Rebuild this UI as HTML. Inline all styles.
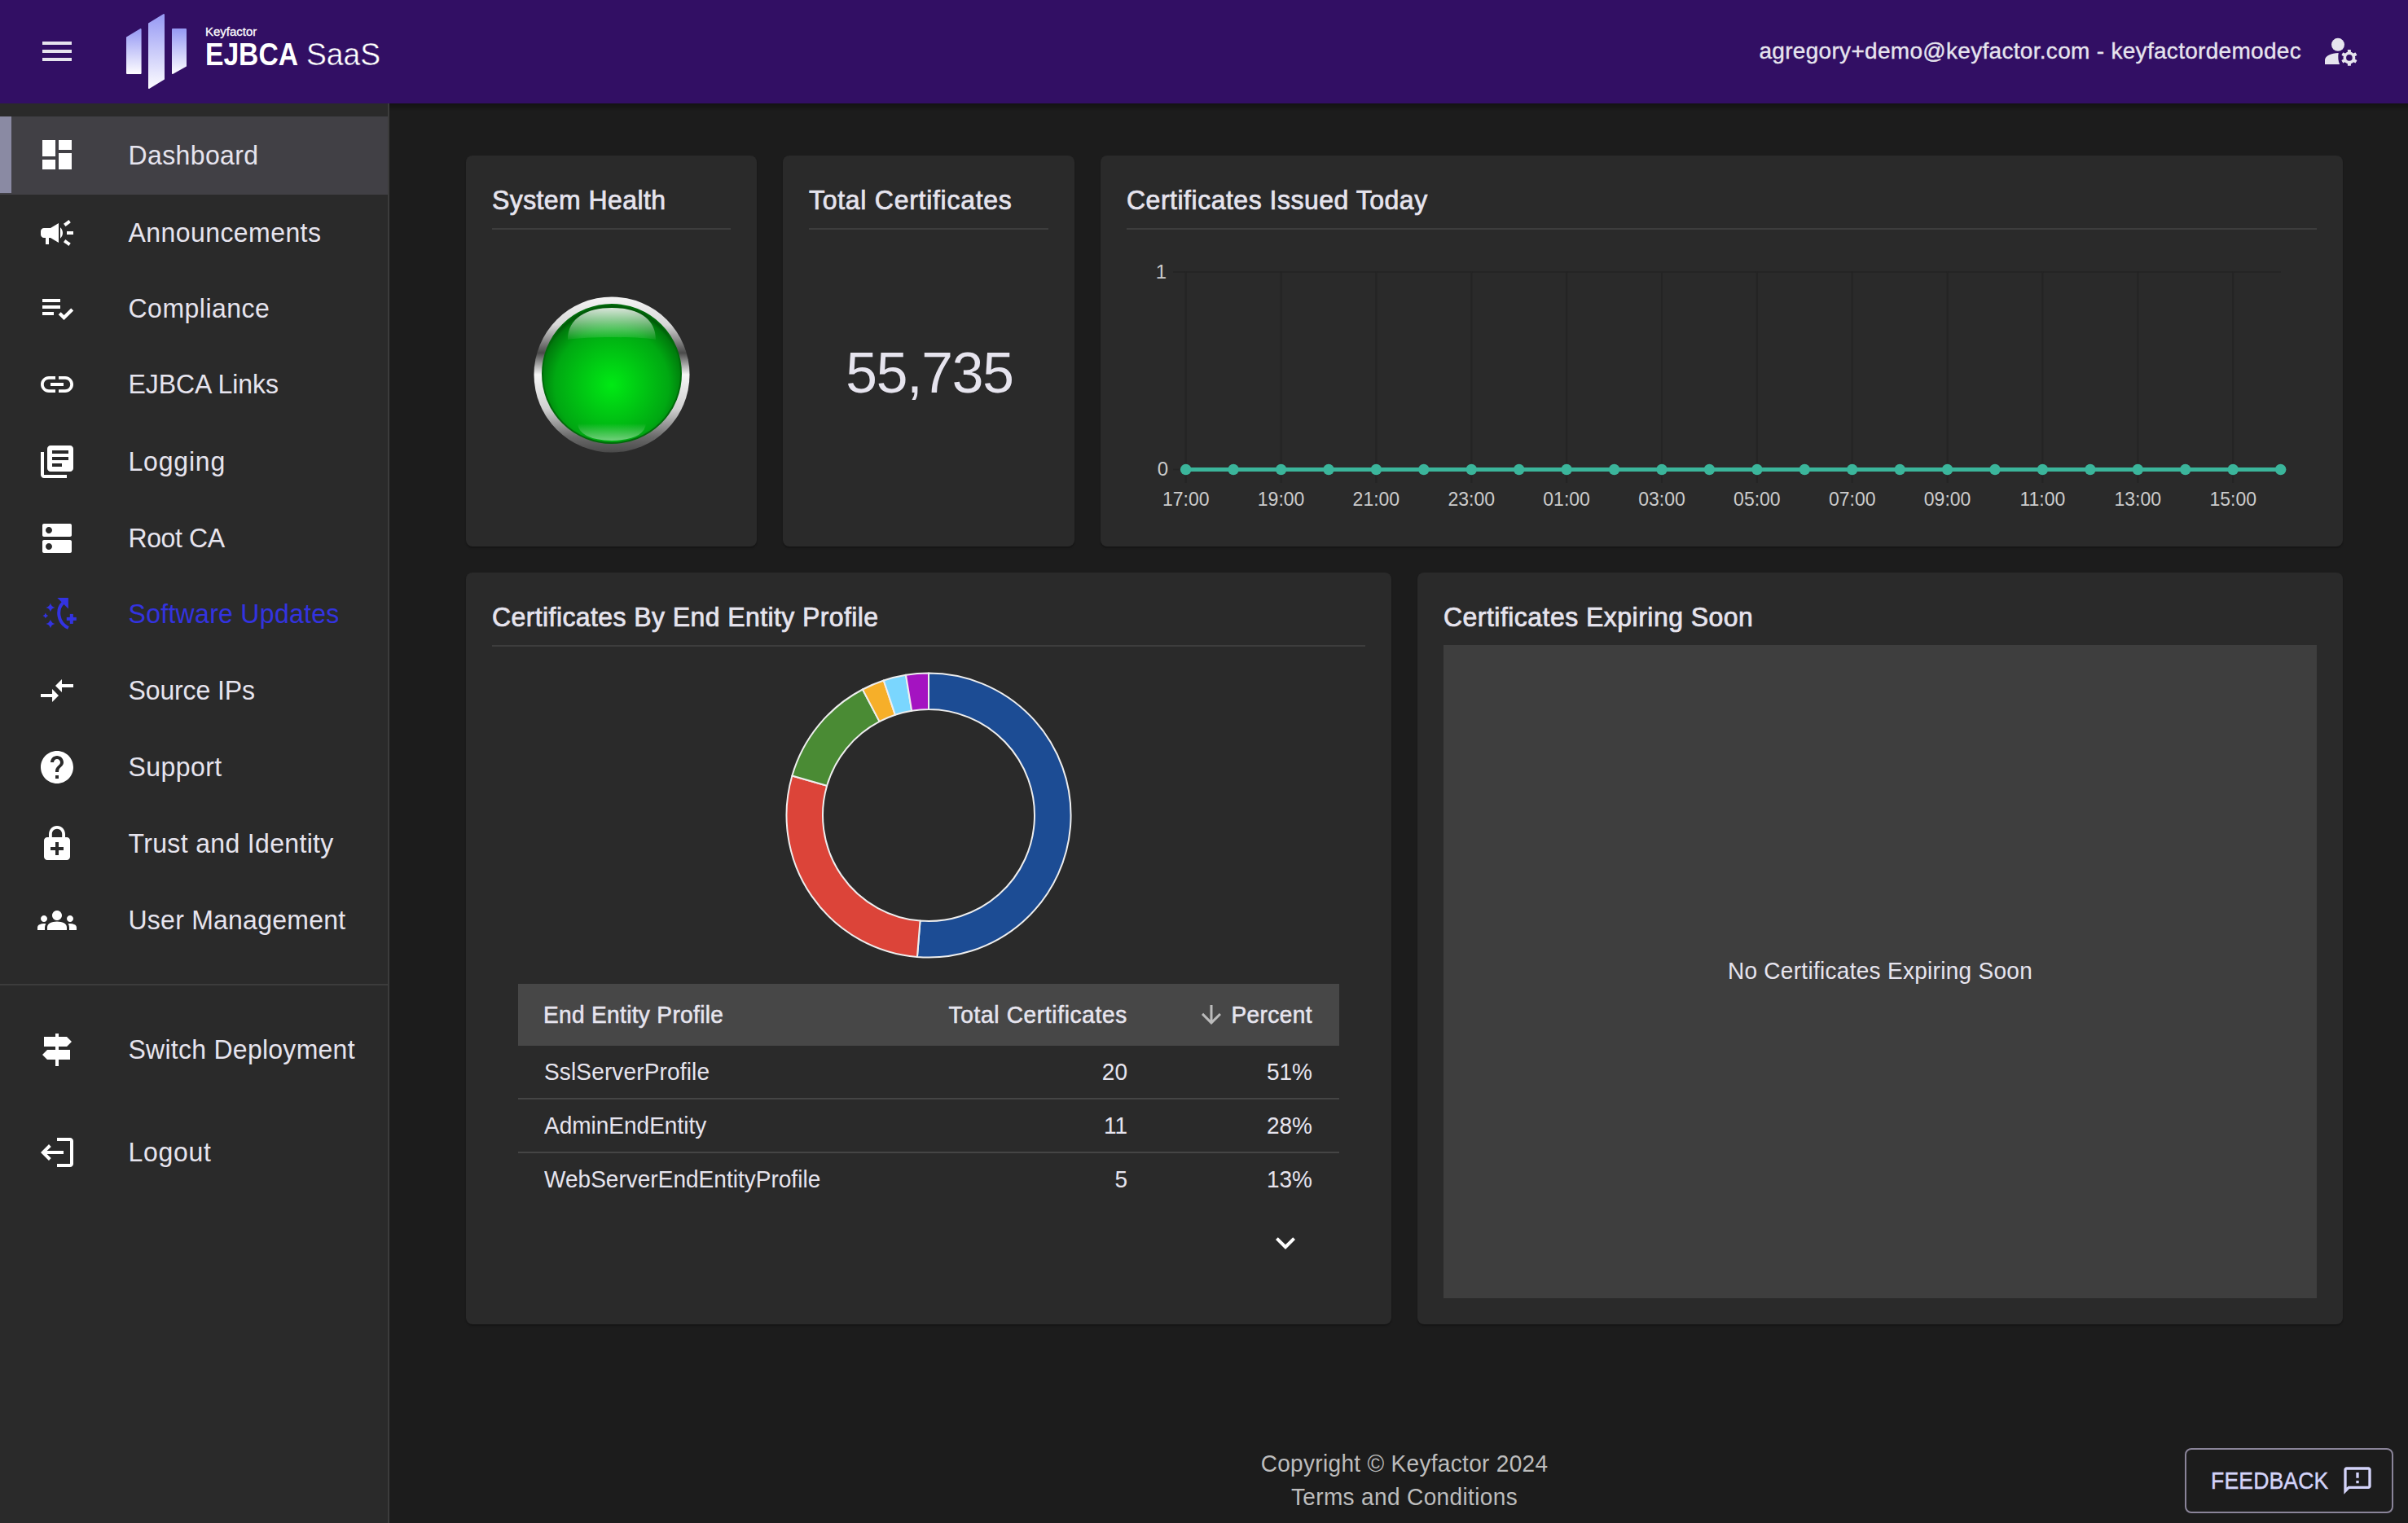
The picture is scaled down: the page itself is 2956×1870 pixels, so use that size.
<!DOCTYPE html>
<html><head><meta charset="utf-8"><title>EJBCA SaaS Dashboard</title>
<style>
html,body{margin:0;padding:0;}
body{width:2956px;height:1870px;background:#1c1c1c;position:relative;overflow:hidden;font-family:"Liberation Sans", sans-serif;}
.t{position:absolute;white-space:nowrap;font-family:"Liberation Sans", sans-serif;}
@media (max-width:1600px){html{zoom:0.5;}}
</style></head><body>
<div style="position:absolute;left:0px;top:0px;width:2956px;height:127px;background:#320f64;"></div>
<div style="position:absolute;left:478px;top:127px;width:2478px;height:10px;background:linear-gradient(rgba(0,0,0,0.35),rgba(0,0,0,0));"></div>
<div style="position:absolute;left:52px;top:51px;width:36px;height:4px;background:#e6e4ee;"></div>
<div style="position:absolute;left:52px;top:61px;width:36px;height:4px;background:#e6e4ee;"></div>
<div style="position:absolute;left:52px;top:71px;width:36px;height:4px;background:#e6e4ee;"></div>
<svg style="position:absolute;left:150px;top:10px" width="90" height="105" viewBox="150 10 90 105">
<defs><linearGradient id="lg" x1="0" y1="0" x2="0" y2="1"><stop offset="0" stop-color="#979af4"/><stop offset="1" stop-color="#fcfbff"/></linearGradient></defs>
<path fill="url(#lg)" stroke="url(#lg)" stroke-width="2" stroke-linejoin="round" d="M156 46 L172.6 36 L172.6 90 L156 90 Z"/>
<path fill="url(#lg)" stroke="url(#lg)" stroke-width="2" stroke-linejoin="round" d="M183 29 L201 18 L201 97 L183 108 Z"/>
<path fill="url(#lg)" stroke="url(#lg)" stroke-width="2" stroke-linejoin="round" d="M212 36 L228 36 L228 81 L212 90 Z"/>
</svg>
<div class="t" style="left:252px;top:30.80px;font-size:15px;line-height:15px;color:#ffffff;font-weight:400;letter-spacing:0px;-webkit-text-stroke:0.3px #fff;">Keyfactor</div>
<div class="t" style="left:252px;top:46.99px;font-size:39px;line-height:39px;color:#ffffff;font-weight:700;letter-spacing:0px;transform:scaleX(0.862);transform-origin:0 0;">EJBCA</div>
<div class="t" style="left:375.5px;top:46.99px;font-size:39px;line-height:39px;color:#ffffff;font-weight:400;letter-spacing:0px;transform:scaleX(0.955);transform-origin:0 0;-webkit-text-stroke:0.45px #320f64;">SaaS</div>
<div class="t" style="right:131px;text-align:right;top:49.30px;font-size:28px;line-height:28px;color:#e6e4ee;font-weight:400;letter-spacing:0.3px;-webkit-text-stroke:0.35px #e6e4ee;">agregory+demo@keyfactor.com - keyfactordemodec</div>
<svg style="position:absolute;left:2850px;top:39px" width="48" height="48" viewBox="0 0 24 24"><g fill="#e6e4ee">
<circle cx="10" cy="7.9" r="4"/>
<path d="M2 20 V17.4 C2 14.6 6 13 10.35 12.95 C9.9 15.4 10.2 18.1 11.05 20 Z"/>
<circle cx="16.95" cy="15.95" r="3.7"/>
<rect x="15.95" y="11" width="2" height="9.9" rx="0.3"/>
<rect x="15.95" y="11" width="2" height="9.9" rx="0.3" transform="rotate(60 16.95 15.95)"/>
<rect x="15.95" y="11" width="2" height="9.9" rx="0.3" transform="rotate(120 16.95 15.95)"/>
</g><circle cx="16.95" cy="15.95" r="1.9" fill="#320f64"/></svg>
<div style="position:absolute;left:0px;top:127px;width:476px;height:1743px;background:#2a2a2a;"></div>
<div style="position:absolute;left:476px;top:127px;width:2px;height:1743px;background:#3c3c3c;"></div>
<div style="position:absolute;left:0px;top:143px;width:476px;height:96px;background:#414045;"></div>
<div style="position:absolute;left:0px;top:143px;width:14px;height:94px;background:#8a8aa3;"></div>
<div class="t" style="left:157.5px;top:174.91px;font-size:32px;line-height:32px;color:#e6e4ee;font-weight:400;letter-spacing:0.38px;transform:scaleY(1.04);transform-origin:0 85%;">Dashboard</div>
<svg style="position:absolute;left:46px;top:166px" width="48" height="48" viewBox="0 0 24 24"><path fill="#ffffff" d="M3 13h8V3H3v10zm0 8h8v-6H3v6zm10 0h8V11h-8v10zm0-18v6h8V3h-8z" /></svg>
<div class="t" style="left:157.5px;top:269.91px;font-size:32px;line-height:32px;color:#e6e4ee;font-weight:400;letter-spacing:0.43px;transform:scaleY(1.04);transform-origin:0 85%;">Announcements</div>
<svg style="position:absolute;left:46px;top:262px" width="48" height="48" viewBox="0 0 24 24"><path fill="#ffffff" d="M18 11v2h4v-2h-4zm-2 6.61c.96.71 2.21 1.65 3.2 2.39.4-.53.8-1.07 1.2-1.6-.99-.74-2.24-1.68-3.2-2.4-.4.54-.8 1.08-1.2 1.61zM20.4 5.6c-.4-.53-.8-1.07-1.2-1.6-.99.74-2.24 1.68-3.2 2.4.4.53.8 1.07 1.2 1.6.96-.72 2.21-1.65 3.2-2.4zM4 9c-1.1 0-2 .9-2 2v2c0 1.1.9 2 2 2h1v4h2v-4h1l5 3V6L8 9H4zm11.5 3c0-1.33-.58-2.53-1.5-3.35v6.69c.92-.81 1.5-2.01 1.5-3.34z" /></svg>
<div class="t" style="left:157.5px;top:362.91px;font-size:32px;line-height:32px;color:#e6e4ee;font-weight:400;letter-spacing:0.49px;transform:scaleY(1.04);transform-origin:0 85%;">Compliance</div>
<svg style="position:absolute;left:46px;top:354px" width="48" height="48" viewBox="0 0 24 24"><path fill="#ffffff" d="M3 16.5v-2h7v2Zm0-4v-2h11v2Zm0-4v-2h11v2Z" /></svg>
<svg style="position:absolute;left:46px;top:354px" width="48" height="48" viewBox="0 0 24 24"><polyline points="13.6,15.4 16.25,18.05 21.35,12.95" fill="none" stroke="#fff" stroke-width="2.1"/></svg>
<div class="t" style="left:157.5px;top:455.91px;font-size:32px;line-height:32px;color:#e6e4ee;font-weight:400;letter-spacing:-0.05px;transform:scaleY(1.04);transform-origin:0 85%;">EJBCA Links</div>
<svg style="position:absolute;left:46px;top:448px" width="48" height="48" viewBox="0 0 24 24"><path fill="#ffffff" d="M3.9 12c0-1.71 1.39-3.1 3.1-3.1h4V7H7c-2.76 0-5 2.24-5 5s2.24 5 5 5h4v-1.9H7c-1.71 0-3.1-1.39-3.1-3.1zM8 13h8v-2H8v2zm9-6h-4v1.9h4c1.71 0 3.1 1.39 3.1 3.1s-1.39 3.1-3.1 3.1h-4V17h4c2.76 0 5-2.24 5-5s-2.24-5-5-5z" /></svg>
<div class="t" style="left:157.5px;top:550.91px;font-size:32px;line-height:32px;color:#e6e4ee;font-weight:400;letter-spacing:0.81px;transform:scaleY(1.04);transform-origin:0 85%;">Logging</div>
<svg style="position:absolute;left:46px;top:543px" width="48" height="48" viewBox="0 0 24 24"><path fill="#ffffff" d="M4 6H2v14c0 1.1.9 2 2 2h14v-2H4V6zm16-4H8c-1.1 0-2 .9-2 2v12c0 1.1.9 2 2 2h12c1.1 0 2-.9 2-2V4c0-1.1-.9-2-2-2zm-1 9H9V9h10v2zm-4 4H9v-2h6v2zm4-8H9V5h10v2z" /></svg>
<div class="t" style="left:157.5px;top:644.91px;font-size:32px;line-height:32px;color:#e6e4ee;font-weight:400;letter-spacing:-0.4px;transform:scaleY(1.04);transform-origin:0 85%;">Root CA</div>
<svg style="position:absolute;left:46px;top:637px" width="48" height="48" viewBox="0 0 24 24"><path fill="#ffffff" d="M20 13H4c-.55 0-1 .45-1 1v6c0 .55.45 1 1 1h16c.55 0 1-.45 1-1v-6c0-.55-.45-1-1-1zM7 19c-1.1 0-2-.9-2-2s.9-2 2-2 2 .9 2 2-.9 2-2 2zM20 3H4c-.55 0-1 .45-1 1v6c0 .55.45 1 1 1h16c.55 0 1-.45 1-1V4c0-.55-.45-1-1-1zM7 9c-1.1 0-2-.9-2-2s.9-2 2-2 2 .9 2 2-.9 2-2 2z" /></svg>
<div class="t" style="left:157.5px;top:737.91px;font-size:32px;line-height:32px;color:#3333e0;font-weight:400;letter-spacing:0.3px;transform:scaleY(1.04);transform-origin:0 85%;">Software Updates</div>
<svg style="position:absolute;left:46px;top:729px" width="48" height="48" viewBox="0 0 24 24">
<g fill="#3333e0"><path d="M12.15 2.5 L18.95 2.5 L18.95 9.3 Z"/>
<path d="M7.95 5.75 Q8.45 7.95 10.7 8.45 Q8.45 8.95 7.95 11.15 Q7.45 8.95 5.2 8.45 Q7.45 7.95 7.95 5.75Z"/>
<path d="M7.95 15.75 Q8.45 17.95 10.7 18.45 Q8.45 18.95 7.95 21.15 Q7.45 18.95 5.2 18.45 Q7.45 17.95 7.95 15.75Z"/>
<path d="M4.95 11.75 Q5.25 13.15 6.65 13.45 Q5.25 13.75 4.95 15.15 Q4.65 13.75 3.25 13.45 Q4.65 13.15 4.95 11.75Z"/>
<rect x="19.9" y="12.45" width="2" height="6"/><rect x="17.9" y="14.45" width="6" height="2"/></g>
<path fill="none" stroke="#3333e0" stroke-width="2" d="M15.7 5.6 C11.8 9.2 11.9 17.6 18.95 21"/>
</svg>
<div class="t" style="left:157.5px;top:831.91px;font-size:32px;line-height:32px;color:#e6e4ee;font-weight:400;letter-spacing:-0.12px;transform:scaleY(1.04);transform-origin:0 85%;">Source IPs</div>
<svg style="position:absolute;left:46px;top:824px" width="48" height="48" viewBox="0 0 24 24"><path fill="#ffffff" d="M9.01 14H2v2h7.01v3L13 15l-3.99-4v3zm5.98-1v-3H22V8h-7.01V5L11 9l3.99 4z" /></svg>
<div class="t" style="left:157.5px;top:925.91px;font-size:32px;line-height:32px;color:#e6e4ee;font-weight:400;letter-spacing:0.43px;transform:scaleY(1.04);transform-origin:0 85%;">Support</div>
<svg style="position:absolute;left:46px;top:918px" width="48" height="48" viewBox="0 0 24 24"><path fill="#ffffff" d="M12 2C6.48 2 2 6.48 2 12s4.48 10 10 10 10-4.48 10-10S17.52 2 12 2zm1 17h-2v-2h2v2zm2.07-7.75l-.9.92C13.45 12.9 13 13.5 13 15h-2v-.5c0-1.1.45-2.1 1.17-2.83l1.24-1.26c.37-.36.59-.86.59-1.41 0-1.1-.9-2-2-2s-2 .9-2 2H8c0-2.21 1.79-4 4-4s4 1.79 4 4c0 .88-.36 1.68-.93 2.25z" /></svg>
<div class="t" style="left:157.5px;top:1019.91px;font-size:32px;line-height:32px;color:#e6e4ee;font-weight:400;letter-spacing:0.34px;transform:scaleY(1.04);transform-origin:0 85%;">Trust and Identity</div>
<svg style="position:absolute;left:46px;top:1012px" width="48" height="48" viewBox="0 0 24 24"><path fill="#ffffff" d="M18 8h-1V6c0-2.76-2.24-5-5-5S7 3.24 7 6v2H6c-1.1 0-2 .9-2 2v10c0 1.1.9 2 2 2h12c1.1 0 2-.9 2-2V10c0-1.1-.9-2-2-2zM8.9 6c0-1.71 1.39-3.1 3.1-3.1s3.1 1.39 3.1 3.1v2H8.9V6zM16 16h-3v3h-2v-3H8v-2h3v-3h2v3h3v2z" /></svg>
<div class="t" style="left:157.5px;top:1113.91px;font-size:32px;line-height:32px;color:#e6e4ee;font-weight:400;letter-spacing:0.24px;transform:scaleY(1.04);transform-origin:0 85%;">User Management</div>
<svg style="position:absolute;left:46px;top:1106px" width="48" height="48" viewBox="0 0 24 24"><path fill="#ffffff" d="M12 12.75c1.63 0 3.07.39 4.24.9 1.08.48 1.76 1.56 1.76 2.73V18H6v-1.61c0-1.18.68-2.26 1.76-2.73 1.17-.52 2.61-.91 4.24-.91zM4 13c1.1 0 2-.9 2-2s-.9-2-2-2-2 .9-2 2 .9 2 2 2zm1.13 1.1c-.37-.06-.74-.1-1.13-.1-.99 0-1.93.21-2.78.58C.48 14.9 0 15.62 0 16.43V18h4.5v-1.61c0-.83.23-1.61.63-2.29zM20 13c1.1 0 2-.9 2-2s-.9-2-2-2-2 .9-2 2 .9 2 2 2zm4 3.43c0-.81-.48-1.53-1.22-1.85-.85-.37-1.79-.58-2.78-.58-.39 0-.76.04-1.13.1.4.68.63 1.46.63 2.29V18H24v-1.57zM12 6c1.66 0 3 1.34 3 3s-1.34 3-3 3-3-1.34-3-3 1.34-3 3-3z" /></svg>
<div class="t" style="left:157.5px;top:1272.91px;font-size:32px;line-height:32px;color:#e6e4ee;font-weight:400;letter-spacing:0.26px;transform:scaleY(1.04);transform-origin:0 85%;">Switch Deployment</div>
<svg style="position:absolute;left:46px;top:1265px" width="48" height="48" viewBox="0 0 24 24"><path fill="#ffffff" d="M13 10h5l3-3-3-3h-5V2h-2v2H4v6h7v2H6l-3 3 3 3h5v4h2v-4h7v-6h-7z" /></svg>
<div class="t" style="left:157.5px;top:1398.91px;font-size:32px;line-height:32px;color:#e6e4ee;font-weight:400;letter-spacing:0.7px;transform:scaleY(1.04);transform-origin:0 85%;">Logout</div>
<svg style="position:absolute;left:46px;top:1391px" width="48" height="48" viewBox="0 0 24 24"><path fill="#ffffff" d="M12 21v-2h8V5h-8V3h8q.825 0 1.413.588Q22 4.175 22 5v14q0 .825-.587 1.413Q20.825 21 20 21ZM7 7l1.375 1.45L5.825 11H16v2H5.825l2.55 2.55L7 17l-5-5Z" /></svg>
<div style="position:absolute;left:0px;top:1208px;width:476px;height:2px;background:#3c3c3c;"></div>
<div style="position:absolute;left:572px;top:191px;width:357px;height:480px;background:#2a2a2a;border-radius:8px;box-shadow:0 2px 2px rgba(0,0,0,0.25)"></div>
<div style="position:absolute;left:961px;top:191px;width:358px;height:480px;background:#2a2a2a;border-radius:8px;box-shadow:0 2px 2px rgba(0,0,0,0.25)"></div>
<div style="position:absolute;left:1351px;top:191px;width:1525px;height:480px;background:#2a2a2a;border-radius:8px;box-shadow:0 2px 2px rgba(0,0,0,0.25)"></div>
<div style="position:absolute;left:572px;top:703px;width:1136px;height:923px;background:#2a2a2a;border-radius:8px;box-shadow:0 2px 2px rgba(0,0,0,0.25)"></div>
<div style="position:absolute;left:1740px;top:703px;width:1136px;height:923px;background:#2a2a2a;border-radius:8px;box-shadow:0 2px 2px rgba(0,0,0,0.25)"></div>
<div class="t" style="left:604px;top:229.91px;font-size:32px;line-height:32px;color:#e6e4ee;font-weight:400;letter-spacing:0.41px;-webkit-text-stroke:0.7px #e6e4ee;transform:scaleY(1.04);transform-origin:0 85%;">System Health</div>
<div style="position:absolute;left:604px;top:280px;width:293px;height:2px;background:#3d3d3d;"></div>
<div class="t" style="left:993px;top:229.91px;font-size:32px;line-height:32px;color:#e6e4ee;font-weight:400;letter-spacing:0.72px;-webkit-text-stroke:0.7px #e6e4ee;transform:scaleY(1.04);transform-origin:0 85%;">Total Certificates</div>
<div style="position:absolute;left:993px;top:280px;width:294px;height:2px;background:#3d3d3d;"></div>
<div class="t" style="left:1383px;top:229.91px;font-size:32px;line-height:32px;color:#e6e4ee;font-weight:400;letter-spacing:0.51px;-webkit-text-stroke:0.7px #e6e4ee;transform:scaleY(1.04);transform-origin:0 85%;">Certificates Issued Today</div>
<div style="position:absolute;left:1383px;top:280px;width:1461px;height:2px;background:#3d3d3d;"></div>
<div class="t" style="left:604px;top:741.91px;font-size:32px;line-height:32px;color:#e6e4ee;font-weight:400;letter-spacing:0.41px;-webkit-text-stroke:0.7px #e6e4ee;transform:scaleY(1.04);transform-origin:0 85%;">Certificates By End Entity Profile</div>
<div style="position:absolute;left:604px;top:792px;width:1072px;height:2px;background:#3d3d3d;"></div>
<div class="t" style="left:1772px;top:741.91px;font-size:32px;line-height:32px;color:#e6e4ee;font-weight:400;letter-spacing:0.47px;-webkit-text-stroke:0.7px #e6e4ee;transform:scaleY(1.04);transform-origin:0 85%;">Certificates Expiring Soon</div>
<div style="position:absolute;left:1772px;top:792px;width:1072px;height:802px;background:#3e3e3e;"></div>
<div class="t" style="left:1308px;width:2000px;text-align:center;top:1179.30px;font-size:28px;line-height:28px;color:#e6e4ee;font-weight:400;letter-spacing:0.29px;transform:scaleY(1.035);transform-origin:0 85%;">No Certificates Expiring Soon</div>
<div class="t" style="left:141px;width:2000px;text-align:center;top:423.67px;font-size:69.5px;line-height:69.5px;color:#e6e4ee;font-weight:400;letter-spacing:-1.2px;">55,735</div>
<svg style="position:absolute;left:651px;top:360px" width="200" height="200" viewBox="0 0 200 200">
<defs>
<linearGradient id="ring" x1="0" y1="0" x2="0" y2="1">
<stop offset="0" stop-color="#f4f4f4"/><stop offset="0.18" stop-color="#d8d8d8"/><stop offset="0.36" stop-color="#4a4a4a"/>
<stop offset="0.5" stop-color="#f6f6f6"/><stop offset="0.72" stop-color="#d0d0d0"/><stop offset="0.9" stop-color="#6a6a6a"/><stop offset="1" stop-color="#4a4a4a"/></linearGradient>
<radialGradient id="grn" cx="0.5" cy="0.58" r="0.55"><stop offset="0" stop-color="#00ea14"/><stop offset="0.75" stop-color="#00a812"/><stop offset="0.95" stop-color="#007a0c"/><stop offset="1" stop-color="#005a08"/></radialGradient>
<linearGradient id="hl" x1="0" y1="0" x2="0" y2="1"><stop offset="0" stop-color="#ffffff" stop-opacity="0.85"/><stop offset="1" stop-color="#ffffff" stop-opacity="0.05"/></linearGradient>
<linearGradient id="hl2" x1="0" y1="0" x2="0" y2="1"><stop offset="0" stop-color="#ffffff" stop-opacity="0"/><stop offset="1" stop-color="#ffffff" stop-opacity="0.45"/></linearGradient>
</defs>
<circle cx="100" cy="100" r="95.5" fill="url(#ring)"/>
<circle cx="100" cy="99" r="85" fill="url(#grn)" stroke="#006a0a" stroke-width="2"/>
<path d="M46 57 C46 30 70 18 100 18 C130 18 154 30 154 57 C130 53 70 53 46 57 Z" fill="url(#hl)"/>
<path d="M58 160 Q60 180 100 181 Q140 180 142 160 Z" fill="url(#hl2)"/>
</svg>
<div class="t" style="left:724px;width:2000px;text-align:center;top:1784.30px;font-size:28px;line-height:28px;color:#bdbdbd;font-weight:400;letter-spacing:0.32px;transform:scaleY(1.035);transform-origin:0 85%;">Copyright © Keyfactor 2024</div>
<div class="t" style="left:724px;width:2000px;text-align:center;top:1824.70px;font-size:28px;line-height:28px;color:#bdbdbd;font-weight:400;letter-spacing:0.37px;transform:scaleY(1.035);transform-origin:0 85%;">Terms and Conditions</div>
<div style="position:absolute;left:2682px;top:1778px;width:252px;height:76px;border:2px solid #8a8499;border-radius:8px"></div>
<div class="t" style="left:2713.5px;top:1804.90px;font-size:28px;line-height:28px;color:#d4d4fa;font-weight:400;letter-spacing:0.14px;-webkit-text-stroke:0.4px #d4d4fa;transform:scaleY(1.035) scaleX(0.95);transform-origin:0 85%;">FEEDBACK</div>
<svg style="position:absolute;left:2874px;top:1798px" width="40" height="40" viewBox="0 0 24 24"><path fill="#d4d4fa" d="M20 2H4c-1.1 0-1.99.9-1.99 2L2 22l4-4h14c1.1 0 2-.9 2-2V4c0-1.1-.9-2-2-2zm0 14H5.17l-.59.59-.58.58V4h16v12zm-9-4h2v2h-2zm0-6h2v4h-2z" /></svg>
<svg style="position:absolute;left:0;top:0" width="2956" height="1870">
<rect x="1440" y="333" width="1360" height="2" fill="#242424"/>
<rect x="1454.7" y="333" width="2" height="260" fill="#242424"/>
<rect x="1571.6" y="333" width="2" height="260" fill="#242424"/>
<rect x="1688.4" y="333" width="2" height="260" fill="#242424"/>
<rect x="1805.3" y="333" width="2" height="260" fill="#242424"/>
<rect x="1922.1" y="333" width="2" height="260" fill="#242424"/>
<rect x="2039.0" y="333" width="2" height="260" fill="#242424"/>
<rect x="2155.9" y="333" width="2" height="260" fill="#242424"/>
<rect x="2272.7" y="333" width="2" height="260" fill="#242424"/>
<rect x="2389.6" y="333" width="2" height="260" fill="#242424"/>
<rect x="2506.4" y="333" width="2" height="260" fill="#242424"/>
<rect x="2623.3" y="333" width="2" height="260" fill="#242424"/>
<rect x="2740.2" y="333" width="2" height="260" fill="#242424"/>
<rect x="1440" y="575.5" width="16" height="2" fill="#242424"/>
<line x1="1455.7" y1="576.5" x2="2799.6" y2="576.5" stroke="#3bb59b" stroke-width="5"/>
<circle cx="1455.7" cy="576.5" r="6.8" fill="#3bb59b"/>
<circle cx="1514.1" cy="576.5" r="6.8" fill="#3bb59b"/>
<circle cx="1572.6" cy="576.5" r="6.8" fill="#3bb59b"/>
<circle cx="1631.0" cy="576.5" r="6.8" fill="#3bb59b"/>
<circle cx="1689.4" cy="576.5" r="6.8" fill="#3bb59b"/>
<circle cx="1747.8" cy="576.5" r="6.8" fill="#3bb59b"/>
<circle cx="1806.3" cy="576.5" r="6.8" fill="#3bb59b"/>
<circle cx="1864.7" cy="576.5" r="6.8" fill="#3bb59b"/>
<circle cx="1923.1" cy="576.5" r="6.8" fill="#3bb59b"/>
<circle cx="1981.6" cy="576.5" r="6.8" fill="#3bb59b"/>
<circle cx="2040.0" cy="576.5" r="6.8" fill="#3bb59b"/>
<circle cx="2098.4" cy="576.5" r="6.8" fill="#3bb59b"/>
<circle cx="2156.9" cy="576.5" r="6.8" fill="#3bb59b"/>
<circle cx="2215.3" cy="576.5" r="6.8" fill="#3bb59b"/>
<circle cx="2273.7" cy="576.5" r="6.8" fill="#3bb59b"/>
<circle cx="2332.2" cy="576.5" r="6.8" fill="#3bb59b"/>
<circle cx="2390.6" cy="576.5" r="6.8" fill="#3bb59b"/>
<circle cx="2449.0" cy="576.5" r="6.8" fill="#3bb59b"/>
<circle cx="2507.4" cy="576.5" r="6.8" fill="#3bb59b"/>
<circle cx="2565.9" cy="576.5" r="6.8" fill="#3bb59b"/>
<circle cx="2624.3" cy="576.5" r="6.8" fill="#3bb59b"/>
<circle cx="2682.7" cy="576.5" r="6.8" fill="#3bb59b"/>
<circle cx="2741.2" cy="576.5" r="6.8" fill="#3bb59b"/>
<circle cx="2799.6" cy="576.5" r="6.8" fill="#3bb59b"/>
</svg>
<div class="t" style="left:1355.7px;width:200px;text-align:center;top:601.9px;font-size:23px;line-height:23px;color:#cccccc">17:00</div>
<div class="t" style="left:1472.6px;width:200px;text-align:center;top:601.9px;font-size:23px;line-height:23px;color:#cccccc">19:00</div>
<div class="t" style="left:1589.4px;width:200px;text-align:center;top:601.9px;font-size:23px;line-height:23px;color:#cccccc">21:00</div>
<div class="t" style="left:1706.3px;width:200px;text-align:center;top:601.9px;font-size:23px;line-height:23px;color:#cccccc">23:00</div>
<div class="t" style="left:1823.1px;width:200px;text-align:center;top:601.9px;font-size:23px;line-height:23px;color:#cccccc">01:00</div>
<div class="t" style="left:1940.0px;width:200px;text-align:center;top:601.9px;font-size:23px;line-height:23px;color:#cccccc">03:00</div>
<div class="t" style="left:2056.9px;width:200px;text-align:center;top:601.9px;font-size:23px;line-height:23px;color:#cccccc">05:00</div>
<div class="t" style="left:2173.7px;width:200px;text-align:center;top:601.9px;font-size:23px;line-height:23px;color:#cccccc">07:00</div>
<div class="t" style="left:2290.6px;width:200px;text-align:center;top:601.9px;font-size:23px;line-height:23px;color:#cccccc">09:00</div>
<div class="t" style="left:2407.4px;width:200px;text-align:center;top:601.9px;font-size:23px;line-height:23px;color:#cccccc">11:00</div>
<div class="t" style="left:2524.3px;width:200px;text-align:center;top:601.9px;font-size:23px;line-height:23px;color:#cccccc">13:00</div>
<div class="t" style="left:2641.2px;width:200px;text-align:center;top:601.9px;font-size:23px;line-height:23px;color:#cccccc">15:00</div>
<div class="t" style="right:1524px;top:321.7px;font-size:24px;line-height:24px;color:#cccccc">1</div>
<div class="t" style="right:1522px;top:563.7px;font-size:24px;line-height:24px;color:#cccccc">0</div>
<svg style="position:absolute;left:0;top:0" width="2956" height="1870">
<path d="M1140.00 826.50 A174.5 174.5 0 1 1 1125.96 1174.93 L1129.54 1130.58 A130 130 0 1 0 1140.00 871.00 Z" fill="#1c4c94" stroke="#eeeeee" stroke-width="2" stroke-linejoin="round"/>
<path d="M1125.96 1174.93 A174.5 174.5 0 0 1 972.39 952.45 L1015.13 964.83 A130 130 0 0 0 1129.54 1130.58 Z" fill="#dc4439" stroke="#eeeeee" stroke-width="2" stroke-linejoin="round"/>
<path d="M972.39 952.45 A174.5 174.5 0 0 1 1058.91 846.49 L1079.59 885.89 A130 130 0 0 0 1015.13 964.83 Z" fill="#4a8b34" stroke="#eeeeee" stroke-width="2" stroke-linejoin="round"/>
<path d="M1058.91 846.49 A174.5 174.5 0 0 1 1084.74 835.48 L1098.83 877.69 A130 130 0 0 0 1079.59 885.89 Z" fill="#f6af29" stroke="#eeeeee" stroke-width="2" stroke-linejoin="round"/>
<path d="M1084.74 835.48 A174.5 174.5 0 0 1 1112.01 828.76 L1119.15 872.68 A130 130 0 0 0 1098.83 877.69 Z" fill="#7ad6fe" stroke="#eeeeee" stroke-width="2" stroke-linejoin="round"/>
<path d="M1112.01 828.76 A174.5 174.5 0 0 1 1140.00 826.50 L1140.00 871.00 A130 130 0 0 0 1119.15 872.68 Z" fill="#a413c1" stroke="#eeeeee" stroke-width="2" stroke-linejoin="round"/>
</svg>
<div style="position:absolute;left:636px;top:1208px;width:1008px;height:76px;background:#474747"></div>
<div style="position:absolute;left:636px;top:1348px;width:1008px;height:2px;background:#454545"></div>
<div style="position:absolute;left:636px;top:1414px;width:1008px;height:2px;background:#454545"></div>
<div class="t" style="left:667px;top:1233.30px;font-size:28px;line-height:28px;color:#e6e4ee;font-weight:400;letter-spacing:0.36px;-webkit-text-stroke:0.55px #e6e4ee;transform:scaleY(1.035);transform-origin:0 85%;">End Entity Profile</div>
<div class="t" style="right:1572px;text-align:right;top:1233.30px;font-size:28px;line-height:28px;color:#e6e4ee;font-weight:400;letter-spacing:0.69px;-webkit-text-stroke:0.55px #e6e4ee;transform:scaleY(1.035);transform-origin:0 85%;">Total Certificates</div>
<div class="t" style="right:1345px;text-align:right;top:1233.30px;font-size:28px;line-height:28px;color:#e6e4ee;font-weight:400;letter-spacing:0.44px;-webkit-text-stroke:0.55px #e6e4ee;transform:scaleY(1.035);transform-origin:0 85%;">Percent</div>
<div class="t" style="left:668px;top:1302.55px;font-size:28px;line-height:28px;color:#e6e4ee;font-weight:400;letter-spacing:0.15px;transform:scaleY(1.035);transform-origin:0 85%;">SslServerProfile</div>
<div class="t" style="right:1572px;text-align:right;top:1302.55px;font-size:28px;line-height:28px;color:#e6e4ee;font-weight:400;letter-spacing:0px;transform:scaleY(1.035);transform-origin:0 85%;">20</div>
<div class="t" style="right:1345px;text-align:right;top:1302.55px;font-size:28px;line-height:28px;color:#e6e4ee;font-weight:400;letter-spacing:0px;transform:scaleY(1.035);transform-origin:0 85%;">51%</div>
<div class="t" style="left:668px;top:1368.80px;font-size:28px;line-height:28px;color:#e6e4ee;font-weight:400;letter-spacing:0px;transform:scaleY(1.035);transform-origin:0 85%;">AdminEndEntity</div>
<div class="t" style="right:1572px;text-align:right;top:1368.80px;font-size:28px;line-height:28px;color:#e6e4ee;font-weight:400;letter-spacing:0px;transform:scaleY(1.035);transform-origin:0 85%;">11</div>
<div class="t" style="right:1345px;text-align:right;top:1368.80px;font-size:28px;line-height:28px;color:#e6e4ee;font-weight:400;letter-spacing:0px;transform:scaleY(1.035);transform-origin:0 85%;">28%</div>
<div class="t" style="left:668px;top:1435.05px;font-size:28px;line-height:28px;color:#e6e4ee;font-weight:400;letter-spacing:0.02px;transform:scaleY(1.035);transform-origin:0 85%;">WebServerEndEntityProfile</div>
<div class="t" style="right:1572px;text-align:right;top:1435.05px;font-size:28px;line-height:28px;color:#e6e4ee;font-weight:400;letter-spacing:0px;transform:scaleY(1.035);transform-origin:0 85%;">5</div>
<div class="t" style="right:1345px;text-align:right;top:1435.05px;font-size:28px;line-height:28px;color:#e6e4ee;font-weight:400;letter-spacing:0px;transform:scaleY(1.035);transform-origin:0 85%;">13%</div>
<svg style="position:absolute;left:1469px;top:1228px" width="36" height="36" viewBox="0 0 24 24"><path fill="#bbbbbb" d="M20 12l-1.41-1.41L13 16.17V4h-2v12.17l-5.58-5.59L4 12l8 8 8-8z" /></svg>
<svg style="position:absolute;left:1554px;top:1502px" width="48" height="48" viewBox="0 0 24 24"><path fill="#ffffff" d="M16.59 8.59L12 13.17 7.41 8.59 6 10l6 6 6-6z" /></svg>
</body></html>
